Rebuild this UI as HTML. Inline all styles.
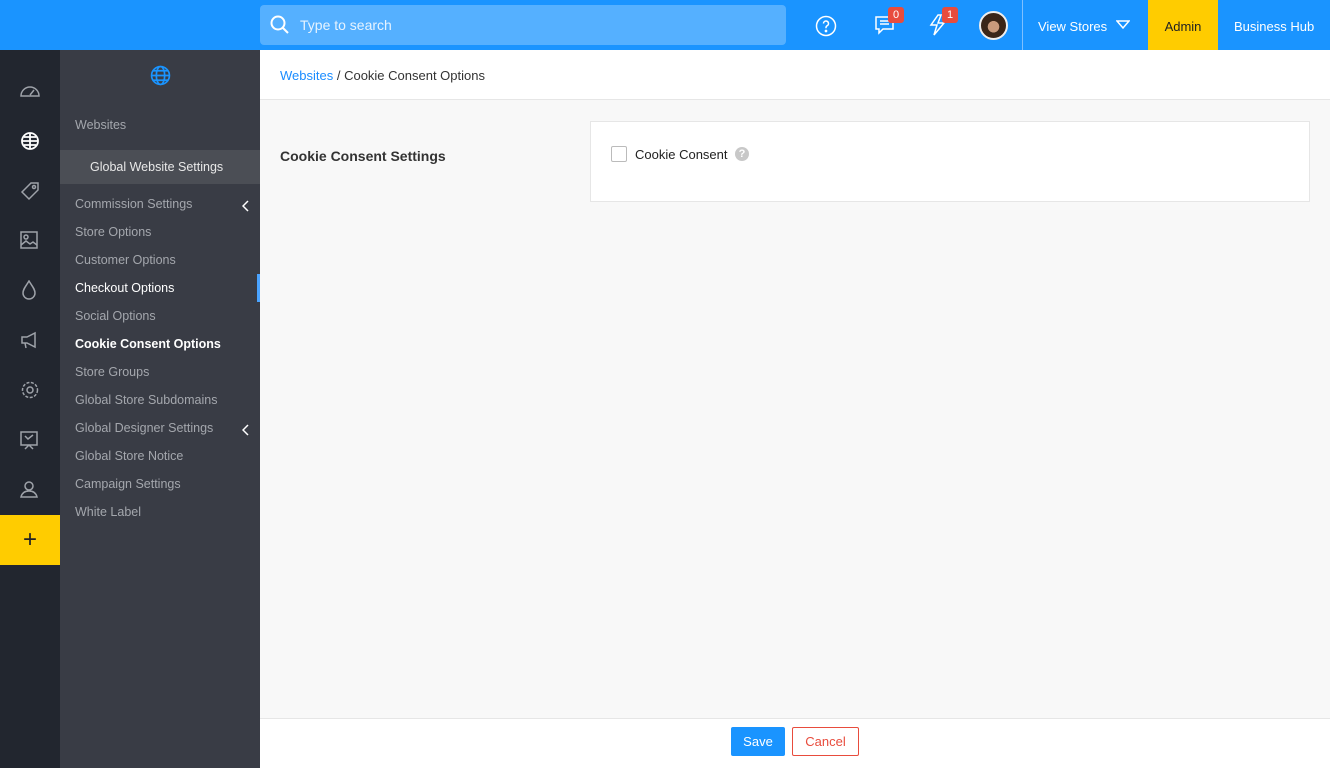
<!DOCTYPE html>
<html><head><meta charset="utf-8"><style>
*{box-sizing:border-box;margin:0;padding:0}
body{width:1330px;height:768px;overflow:hidden;font-family:"Liberation Sans",sans-serif;background:#f8f8f8;position:relative}
.top{position:absolute;left:0;top:0;width:1330px;height:50px;background:#1a94ff}
.search{position:absolute;left:260px;top:5px;width:526px;height:40px;background:#55b0ff;border-radius:4px;color:#e6f3ff;font-size:14px;line-height:40px;padding-left:40px}
.ico{position:absolute}
.badge{position:absolute;background:#e84c3d;color:#fff;font-size:11px;width:16px;height:16px;border-radius:3px;text-align:center;line-height:16px}
.tb{position:absolute;top:0;height:50px;line-height:54px;font-size:13px;color:#fff}
.rail{position:absolute;left:0;top:50px;width:60px;height:718px;background:#22262f}
.side{position:absolute;left:60px;top:50px;width:200px;height:718px;background:#393c45}
.side a{position:absolute;left:15px;font-size:12.5px;color:#a4a7ad;display:block}
.side a.w{color:#fff}
.main{position:absolute;left:260px;top:50px;width:1070px;height:668px;background:#f8f8f8}
.crumb{height:50px;background:#fff;border-bottom:1px solid #e6e6e6;font-size:13px;line-height:52px;padding-left:20px;color:#333}
.foot{position:absolute;left:260px;top:718px;width:1070px;height:50px;background:#fff;border-top:1px solid #e6e6e6}
</style></head><body>
<div class="top">
<div class="search">Type to search</div>
<svg class="ico" style="left:270px;top:15px" width="20" height="20" viewBox="0 0 20 20" fill="none" stroke="#fff" stroke-width="2"><circle cx="8" cy="8" r="6.5"/><path d="M13 13l5 5"/></svg>
<svg class="ico" style="left:815px;top:15px" width="22" height="22" viewBox="0 0 22 22" fill="none" stroke="#fff" stroke-width="1.5"><circle cx="11" cy="11" r="9.5"/><path d="M8.5 8.5a2.5 2.5 0 1 1 3.5 2.3c-.7.4-1 .9-1 1.7v.8"/><circle cx="11" cy="16" r=".6" fill="#fff"/></svg>
<svg class="ico" style="left:874px;top:14px" width="22" height="22" viewBox="0 0 22 22" fill="none" stroke="#fff" stroke-width="1.5"><path d="M2 3h17v12H9l-4 4v-4H2z M6 7h9M6 10h9"/></svg>
<div class="badge" style="left:888px;top:7px">0</div>
<svg class="ico" style="left:929px;top:14px" width="20" height="22" viewBox="0 0 20 22" fill="none" stroke="#fff" stroke-width="1.5"><path d="M9 1L2 11h6l-3 10 10-12H9l3-8z"/></svg>
<div class="badge" style="left:942px;top:7px">1</div>
<div style="position:absolute;left:979px;top:11px;width:29px;height:29px;border-radius:50%;background:radial-gradient(circle at 50% 55%,#c99a7c 0 30%,#3a2518 32%);border:2px solid #eee"></div>
<div style="position:absolute;left:1022px;top:0;width:1px;height:50px;background:#7fc0ff"></div>
<div class="tb" style="left:1038px">View Stores</div>
<svg class="ico" style="left:1116px;top:20px" width="14" height="10" viewBox="0 0 14 10" fill="none" stroke="#fff" stroke-width="1.5"><path d="M1 1h12L7 8z"/></svg>
<div class="tb" style="left:1148px;width:70px;background:#ffcc00;color:#222;text-align:center">Admin</div>
<div class="tb" style="left:1234px">Business Hub</div>
</div>
<div class="rail">
<svg class="ico" style="left:19px;top:31px" width="22" height="18" viewBox="0 0 22 18" fill="none" stroke="#9ea2a9" stroke-width="1.5"><path d="M2 15a9 9 0 1 1 18 0z M11 14l4-5"/></svg>
<svg class="ico" style="left:20px;top:81px" width="20" height="20" viewBox="0 0 20 20" fill="none" stroke="#fff" stroke-width="1.8"><circle cx="10" cy="10" r="8"/><path d="M2 10h16M10 2v16M4 6h12M4 14h12"/></svg>
<svg class="ico" style="left:20px;top:131px" width="20" height="20" viewBox="0 0 20 20" fill="none" stroke="#9ea2a9" stroke-width="1.5"><path d="M11 2h7v7l-9 9-7-7z"/><circle cx="14" cy="6" r="1.5"/></svg>
<svg class="ico" style="left:20px;top:181px" width="18" height="18" viewBox="0 0 18 18" fill="none" stroke="#9ea2a9" stroke-width="1.5"><rect x="1" y="1" width="16" height="16"/><circle cx="6" cy="6" r="2"/><path d="M1 14l5-4 4 3 3-2 4 3"/></svg>
<svg class="ico" style="left:22px;top:230px" width="14" height="20" viewBox="0 0 14 20" fill="none" stroke="#9ea2a9" stroke-width="1.5"><path d="M7 1C4 6 1 9 1 13a6 6 0 0 0 12 0c0-4-3-7-6-12z"/></svg>
<svg class="ico" style="left:20px;top:281px" width="20" height="18" viewBox="0 0 20 18" fill="none" stroke="#9ea2a9" stroke-width="1.5"><path d="M2 6h5l8-4v14l-8-4H2z M5 12l1 5"/></svg>
<svg class="ico" style="left:20px;top:330px" width="20" height="20" viewBox="0 0 20 20" fill="none" stroke="#9ea2a9" stroke-width="1.5"><circle cx="10" cy="10" r="3"/><circle cx="10" cy="10" r="7.5" stroke-dasharray="3 1.5"/></svg>
<svg class="ico" style="left:20px;top:380px" width="18" height="20" viewBox="0 0 18 20" fill="none" stroke="#9ea2a9" stroke-width="1.5"><path d="M1 2h16v13H1z M5 19l4-4 4 4 M5 6l3 3 5-4"/></svg>
<svg class="ico" style="left:20px;top:430px" width="18" height="18" viewBox="0 0 18 18" fill="none" stroke="#9ea2a9" stroke-width="1.5"><circle cx="9" cy="6" r="4"/><path d="M1 17c1-4 4-6 8-6s7 2 8 6z"/></svg>
<div style="position:absolute;left:0;top:465px;width:60px;height:50px;background:#ffcc00;text-align:center;line-height:50px;font-size:24px;color:#222">+</div>
</div>
<div class="side">
<svg class="ico" style="left:90px;top:15px" width="21" height="21" viewBox="0 0 20 20" fill="none" stroke="#1a94ff" stroke-width="1.6"><circle cx="10" cy="10" r="8.5"/><ellipse cx="10" cy="10" rx="4" ry="8.5"/><path d="M1.5 10h17M3 5.5h14M3 14.5h14"/></svg>
<a style="top:68px">Websites</a>
<div style="position:absolute;left:0;top:100px;width:200px;height:34px;background:#4b4e55;color:#e8e8e8;font-size:12.5px;line-height:34px;padding-left:30px">Global Website Settings</div>
<a style="top:147px">Commission Settings</a>
<a style="top:175px">Store Options</a>
<a style="top:203px">Customer Options</a>
<a class="w" style="top:231px">Checkout Options</a>
<a style="top:259px">Social Options</a>
<a class="w" style="top:287px;font-weight:bold">Cookie Consent Options</a>
<a style="top:315px">Store Groups</a>
<a style="top:343px">Global Store Subdomains</a>
<a style="top:371px">Global Designer Settings</a>
<a style="top:399px">Global Store Notice</a>
<a style="top:427px">Campaign Settings</a>
<a style="top:455px">White Label</a>
<svg class="ico" style="left:182px;top:150px" width="8" height="12" viewBox="0 0 8 12" fill="none" stroke="#fff" stroke-width="1.5"><path d="M6 1L1 6l5 5"/></svg>
<svg class="ico" style="left:182px;top:374px" width="8" height="12" viewBox="0 0 8 12" fill="none" stroke="#fff" stroke-width="1.5"><path d="M6 1L1 6l5 5"/></svg>
<div style="position:absolute;left:197px;top:224px;width:3px;height:28px;background:#4aa3ff"></div>
</div>
<div class="main">
<div class="crumb"><span style="color:#1a8cff">Websites</span> / Cookie Consent Options</div>
<div style="position:absolute;left:20px;top:98px;font-size:14px;font-weight:bold;color:#333">Cookie Consent Settings</div>
<div style="position:absolute;left:330px;top:71px;width:720px;height:81px;background:#fff;border:1px solid #e6e6e6">
<div style="position:absolute;left:20px;top:24px;width:16px;height:16px;border:1px solid #bbb;border-radius:2px"></div>
<div style="position:absolute;left:44px;top:25px;font-size:13px;color:#222">Cookie Consent</div>
<div style="position:absolute;left:144px;top:25px;width:14px;height:14px;border-radius:50%;background:#c8c8c8;color:#fff;font-size:11px;font-weight:bold;text-align:center;line-height:14px">?</div>
</div>
</div>
<div class="foot">
<div style="position:absolute;left:471px;top:8px;width:54px;height:29px;background:#1a94ff;color:#fff;font-size:13px;text-align:center;line-height:29px;border-radius:2px">Save</div>
<div style="position:absolute;left:532px;top:8px;width:67px;height:29px;border:1px solid #e84c3d;color:#e84c3d;font-size:13px;text-align:center;line-height:27px;border-radius:2px">Cancel</div>
</div>
</body></html>
